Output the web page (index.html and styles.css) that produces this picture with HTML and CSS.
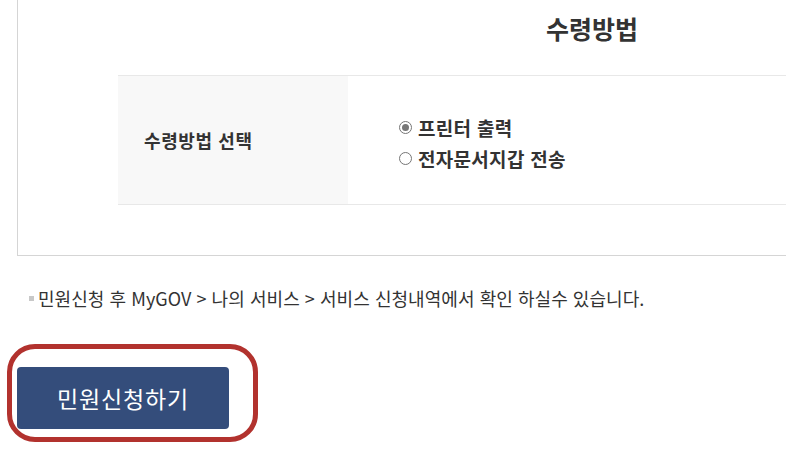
FILE: index.html
```html
<!DOCTYPE html>
<html lang="ko">
<head>
    <meta charset="UTF-8">
    <meta name="viewport" content="width=device-width, initial-scale=1.0">
    <title>수령방법</title>
    <link rel="stylesheet" href="styles.css">
</head>
<body>
    <div class="page">
        <div class="box">
            <h2 class="box-title">수령방법</h2>
            <table class="form-table">
                <tr>
                    <th>수령방법 선택</th>
                    <td>
                        <label class="radio checked"><span class="dot"></span>프린터 출력</label>
                        <label class="radio"><span class="dot"></span>전자문서지갑 전송</label>
                    </td>
                </tr>
            </table>
        </div>

        <p class="note">민원신청 후 MyGOV &gt; 나의 서비스 &gt; 서비스 신청내역에서 확인 하실수 있습니다.</p>

        <div class="highlight">
            <button class="submit-btn" type="button">민원신청하기</button>
        </div>
    </div>
</body>
</html>
```

FILE: styles.css
```css
/* 기본 */
body {
    margin: 0;
    padding: 0;
    background: #fff;
    color: #333;
    font-family: "Noto Sans CJK KR", "Noto Sans", sans-serif;
    overflow: hidden;
}

.page {
    width: 786px;
}

/* 수령방법 박스 */
.box {
    margin-left: 17px;
    width: 1148px;
    border-left: 1px solid #d5d5d5;
    border-bottom: 1px solid #d5d5d5;
    padding-bottom: 50px;
}

.box-title {
    margin: 0;
    padding-top: 11px;
    font-size: 25px;
    line-height: 34px;
    font-weight: bold;
    text-align: center;
    color: #333;
}

.form-table {
    margin: 30px 0 0 100px;
    width: 1048px;
    border-collapse: collapse;
    border-top: 1px solid #e8e8e8;
    border-bottom: 1px solid #e8e8e8;
}

.form-table th {
    width: 204px;
    height: 128px;
    padding: 0 0 0 26px;
    background: #f8f8f8;
    text-align: left;
    font-size: 18px;
    font-weight: bold;
    color: #333;
    letter-spacing: 0.6px;
}

.form-table td {
    padding: 6px 0 0 51px;
    vertical-align: middle;
}

.radio {
    display: flex;
    align-items: center;
    gap: 6px;
    height: 31px;
    font-size: 19px;
    font-weight: bold;
    color: #333;
    letter-spacing: 0.3px;
}

.radio .dot {
    box-sizing: border-box;
    width: 13px;
    height: 13px;
    border: 1px solid #767676;
    border-radius: 50%;
    background: #fff;
    position: relative;
}

.radio.checked .dot::after {
    content: "";
    position: absolute;
    left: 2px;
    top: 2px;
    width: 7px;
    height: 7px;
    border-radius: 50%;
    background: #767676;
}

/* 안내문 */
.note {
    margin: 30px 0 0 29px;
    font-size: 18px;
    line-height: 24px;
    color: #333;
    letter-spacing: 0.05px;
    display: flex;
    align-items: center;
    gap: 4px;
}

.note::before {
    content: "";
    flex: none;
    width: 5px;
    height: 5px;
    background: #c8c8c8;
}

/* 신청 버튼 */
.highlight {
    display: inline-block;
    margin: 34px 0 0 7px;
    padding: 18px 24px 8px 5px;
    border: 5px solid #b2322e;
    border-radius: 28px;
}

.submit-btn {
    display: block;
    width: 212px;
    height: 62px;
    border: none;
    border-radius: 4px;
    background: #344d7b;
    color: #fff;
    font-family: "Noto Sans CJK KR", "Noto Sans", sans-serif;
    font-size: 23px;
    letter-spacing: 0.8px;
    cursor: pointer;
}
```
